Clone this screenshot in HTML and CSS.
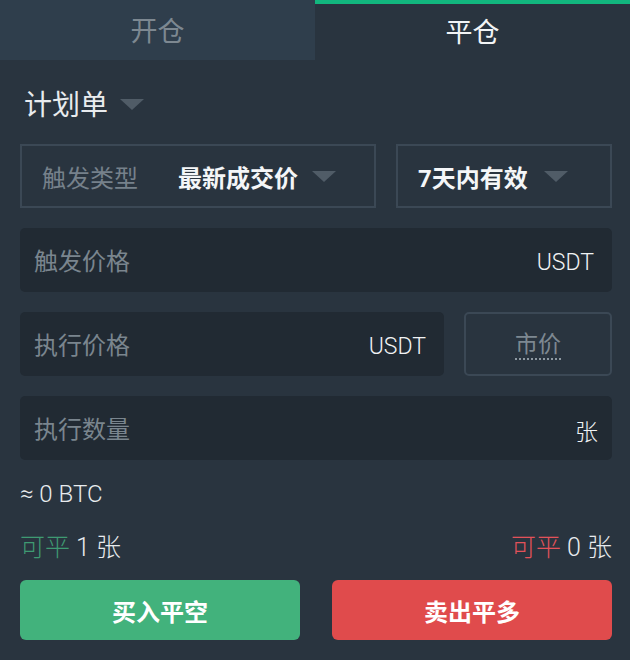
FILE: index.html
```html
<!DOCTYPE html>
<html lang="zh">
<head>
<meta charset="utf-8">
<link rel="stylesheet" href="styles.css">
</head>
<body>
<div class="panel">
  <div class="tabs">
    <div class="tab">开仓</div>
    <div class="tab active">平仓</div>
  </div>
  <div class="body">
    <div class="type">计划单 <span class="caret"></span></div>
    <div class="row">
      <div class="select grow">
        <span class="label">触发类型</span>
        <span class="value">最新成交价</span>
        <span class="caret"></span>
      </div>
      <div class="select period">
        <span class="value">7天内有效</span>
        <span class="caret"></span>
      </div>
    </div>
    <div class="input"><span class="ph">触发价格</span><span class="unit">USDT</span></div>
    <div class="row">
      <div class="input grow"><span class="ph">执行价格</span><span class="unit">USDT</span></div>
      <div class="market"><span>市价</span></div>
    </div>
    <div class="input qty"><span class="ph">执行数量</span><span class="unit">张</span></div>
    <div class="approx">≈ 0 BTC</div>
    <div class="avail">
      <div><span class="green">可平</span> 1 张</div>
      <div><span class="red">可平</span> 0 张</div>
    </div>
    <div class="buttons">
      <button class="btn buy">买入平空</button>
      <button class="btn sell">卖出平多</button>
    </div>
  </div>
</div>
</body>
</html>
```
FILE: styles.css
```css
* { box-sizing: border-box; }
html, body { margin: 0; padding: 0; background: #29343f; }
body {
  width: 630px; height: 660px; overflow: hidden;
  font-family: Roboto, "Noto Sans CJK SC", sans-serif;
  color: #e8ebee;
}
.tabs { display: flex; height: 60px; }
.tab {
  flex: 1; display: flex; align-items: center; justify-content: center;
  font-size: 27px; color: #7d8891; background: #2f3e4c;
  padding-bottom: 2px;
}
.tab.active { background: #29343f; color: #f2f4f6; border-top: 4px solid #12b67e; padding-bottom: 4px; }
.body { padding: 0 18px 0 20px; }
.type {
  height: 84px; display: flex; align-items: center; font-size: 28px;
  padding-left: 4px; padding-top: 2px;
}
.caret {
  display: inline-block; width: 0; height: 0;
  border-left: 12px solid transparent; border-right: 12px solid transparent;
  border-top: 11px solid #505c67;
}
.type .caret { margin-left: 12px; margin-top: 2px; }
.row { display: flex; gap: 20px; margin-bottom: 20px; }
.grow { flex: 1; }
.select {
  height: 64px; border: 2px solid #3b4855; display: flex; align-items: center;
  font-size: 24px;
}
.select.grow { padding-left: 20px; }
.select .label { color: #76818b; width: 136px; }
.select .value { color: #f4f6f8; font-weight: bold; }
.select .caret { margin-left: 14px; }
.period { width: 216px; padding-left: 20px; }
.period .caret { margin-left: 16px; }
.input {
  height: 64px; background: #212a33; border-radius: 5px;
  display: flex; align-items: center; justify-content: space-between;
  padding: 0 18px 0 14px; margin-bottom: 20px; font-size: 24px;
}
.input .ph { padding-bottom: 2px; }
.input.qty { padding-right: 14px; }
.row .input { margin-bottom: 0; padding-right: 18px; }
.ph { color: #7a858e; }
.unit { color: #f0f2f4; font-size: 23px; font-weight: 300; padding-top: 4px; }
.market {
  width: 148px; height: 64px; border: 2px solid #3b4855; border-radius: 5px;
  display: flex; align-items: center; justify-content: center;
  color: #7d8891; font-size: 23px;
}
.market span { border-bottom: 2px dotted #8e99a2; line-height: 26px; padding-top: 4px; }
.approx { font-size: 24px; font-weight: 300; height: 28px; display: flex; align-items: center; }
.avail {
  display: flex; justify-content: space-between; font-size: 25px; font-weight: 300;
  height: 50px; align-items: center; margin-top: 12px;
}
.green { color: #3f9a72; }
.red { color: #e2525a; }
.buttons { display: flex; gap: 32px; margin-top: 10px; }
.btn {
  flex: 1; height: 60px; border: 0; border-radius: 6px; color: #fff;
  font-family: Roboto, "Noto Sans CJK SC", sans-serif; font-weight: bold; font-size: 24px;
}
.buy { background: #42b27c; }
.sell { background: #e04b4c; }
```
